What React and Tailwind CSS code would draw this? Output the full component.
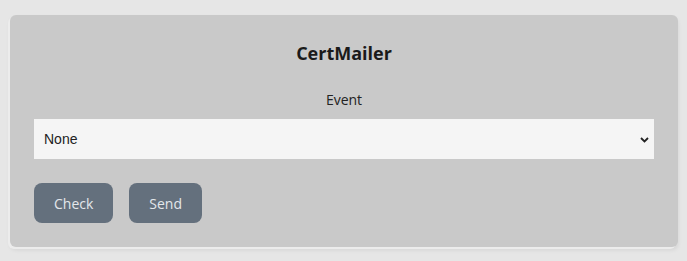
import React from "react";

export default function App() {
  return (
    <div className="min-h-[261px] w-full bg-[#e6e6e6] pl-[10px] pr-[9px] pt-[15px] pb-[14px] font-['Open_Sans',sans-serif]">
      <div className="rounded-[6px] bg-[#c9c9c9] px-6 pt-[25px] pb-6 shadow-[-2px_2px_0_#ececec,0_3px_4px_rgba(0,0,0,0.08)]">
        <h1 className="text-center text-[18px] leading-[27px] font-bold text-[#1a1a1a]">CertMailer</h1>
        <div className="mt-[22px] text-center text-[14px] leading-[21px] text-[#222]">Event</div>
        <div className="relative mt-[9px]">
          <select className="block h-[40px] w-full appearance-none bg-[#f5f5f5] pl-[10px] pr-8 font-['Liberation_Sans',Arial,sans-serif] text-[14px] text-[#222] outline-none">
            <option>None</option>
          </select>
          <svg className="pointer-events-none absolute right-[5px] top-[18px]" width="9" height="6" viewBox="0 0 9 6" fill="none">
            <path d="M1 1L4.5 4.5L8 1" stroke="#222" strokeWidth="1.8" />
          </svg>
        </div>
        <div className="mt-6 flex gap-4">
          <button className="h-[40px] rounded-[8px] bg-[#64707d] px-5 text-[14px] text-[#e3e7eb]">Check</button>
          <button className="h-[40px] rounded-[8px] bg-[#64707d] px-5 text-[14px] text-[#e3e7eb]">Send</button>
        </div>
      </div>
    </div>
  );
}
